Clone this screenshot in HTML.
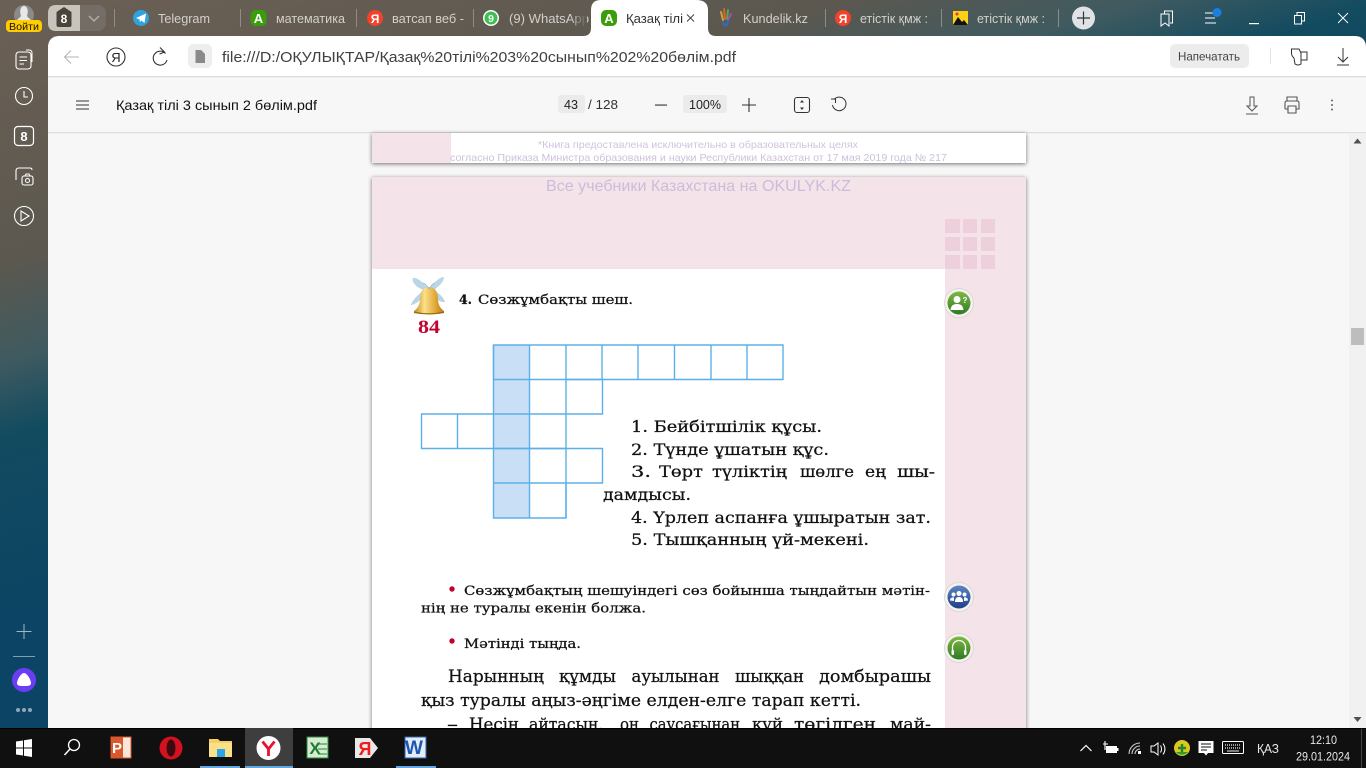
<!DOCTYPE html>
<html lang="ru"><head><meta charset="utf-8"><title>Қазақ тілі 3 сынып 2 бөлім.pdf</title>
<style>
html,body{margin:0;padding:0;width:1366px;height:768px;overflow:hidden;background:#f7f7f7}
svg{display:block;position:absolute;left:0;top:0}
text{font-family:"Liberation Sans","DejaVu Sans",sans-serif;white-space:pre}
.tab{font-size:13px;fill:#d3d0cb}
.s{font-family:"DejaVu Serif","Liberation Serif",serif;fill:#111;stroke:#111;stroke-width:.25px}
.r84{font-family:"Liberation Serif",serif;font-size:19px;font-weight:bold;fill:#c4002f}
.l{font-size:15.5px}.m{font-size:13px}.b{font-size:16.5px}
.ws{fill:none;stroke:#fff}
.dk{fill:none;stroke:#333}
.lk{fill:none;stroke:#555}
.gr{fill:none;stroke:#5cb0ea;stroke-width:1.4px}
</style></head><body>
<svg width="1366" height="768" viewBox="0 0 1366 768" xmlns="http://www.w3.org/2000/svg">
<defs>
<linearGradient id="bg" gradientUnits="userSpaceOnUse" x1="0" y1="0" x2="180" y2="570">
<stop offset="0" stop-color="#6b6055"/><stop offset=".42" stop-color="#5c584f"/><stop offset=".58" stop-color="#3f5a60"/><stop offset=".7" stop-color="#124b60"/><stop offset="1" stop-color="#0b4464"/></linearGradient>
<linearGradient id="fade" x1="0" x2="1" y1="0" y2="0"><stop offset="0" stop-color="#5f5a52" stop-opacity="0"/><stop offset="1" stop-color="#5f5a52"/></linearGradient>
<linearGradient id="bell" x1="0" x2="1" y1="0" y2="0"><stop offset="0" stop-color="#c4881e"/><stop offset=".35" stop-color="#fbe08a"/><stop offset=".7" stop-color="#e2a93a"/><stop offset="1" stop-color="#b97a14"/></linearGradient>
<linearGradient id="grn" x1="0" x2="0" y1="0" y2="1"><stop offset="0" stop-color="#7fb843"/><stop offset="1" stop-color="#2f7a26"/></linearGradient>
<linearGradient id="blu" x1="0" x2="0" y1="0" y2="1"><stop offset="0" stop-color="#5c84c4"/><stop offset="1" stop-color="#1f3f8a"/></linearGradient>
<filter id="sh" x="-5%" y="-20%" width="110%" height="140%"><feDropShadow dx="0" dy="1" stdDeviation="2" flood-color="#000" flood-opacity=".55"/></filter>
</defs>

<rect width="1366" height="768" fill="url(#bg)"/>

<!-- browser content -->
<path d="M60 36H1354Q1366 36 1366 48V768H48V48Q48 36 60 36Z" fill="#f7f7f7"/>
<path d="M60 36H1354Q1366 36 1366 48V76H48V48Q48 36 60 36Z" fill="#fff"/>
<rect x="48" y="76" width="1318" height="1.3" fill="#dcdcdc"/>
<rect x="48" y="132" width="1318" height="1.3" fill="#dedede"/>

<!-- active tab -->
<path d="M583 36Q591 36 591 28V10Q591 0 601 0H696Q708 0 708 10V28Q708 36 716 36Z" fill="#fff"/>

<!-- user / group -->
<circle cx="24" cy="15" r="10" fill="#8a8a8a"/>
<path d="M16 22C18 18 20 18 21 16C19 10 21 6 24 6C27 6 29 10 27 16C28 18 30 18 32 22Z" fill="#e8e8e8"/>
<rect x="6" y="20" width="36" height="12" rx="4" fill="#ffcc00"/>
<text x="9" y="30" font-size="10.5" fill="#111" textLength="30" lengthAdjust="spacingAndGlyphs">Войти</text>
<rect x="48" y="5" width="58" height="26" rx="8" fill="#77706a" opacity=".8"/>
<path d="M56 5H80V31H56Q48 31 48 23V13Q48 5 56 5Z" fill="#c9c4bb"/>
<path d="M56.500 12L64 7L71.500 12V25Q71.500 27 69.500 27H58.500Q56.500 27 56.500 25Z" fill="#4b443d"/>
<text x="64" y="23" font-size="12" font-weight="bold" fill="#fff" text-anchor="middle">8</text>
<path d="M89 16L94 21L99 16" fill="none" stroke="#b8b3ab" stroke-width="1.3"/>

<!-- separators -->
<g fill="#8f8c86"><rect x="114" y="9" width="1" height="18"/><rect x="240" y="9" width="1" height="18"/><rect x="356" y="9" width="1" height="18"/><rect x="473" y="9" width="1" height="18"/><rect x="825" y="9" width="1" height="18"/><rect x="941" y="9" width="1" height="18"/><rect x="1058" y="9" width="1" height="18"/></g>

<!-- tabs -->
<circle cx="141" cy="18" r="8" fill="#2fa3de"/><path d="M136 18L146 13.500L144.500 23L141.500 20.500L140 22L139.500 19.500Z" fill="#fff"/>
<text class="tab" x="158" y="23" textLength="52" lengthAdjust="spacingAndGlyphs">Telegram</text>

<rect x="250.500" y="10" width="16" height="16" rx="5" fill="#3b9c0c"/><text x="258.500" y="23" font-size="13" font-weight="bold" fill="#fff" text-anchor="middle">А</text>
<text class="tab" x="276" y="23" textLength="69" lengthAdjust="spacingAndGlyphs">математика</text>

<circle cx="375" cy="18" r="8" fill="#f5402a"/><text x="375" y="23" font-size="12" font-weight="bold" fill="#fff" text-anchor="middle">Я</text>
<text class="tab" x="392" y="23" textLength="72" lengthAdjust="spacingAndGlyphs">ватсап веб -</text>

<circle cx="491" cy="18" r="8" fill="#fff"/><circle cx="491" cy="18" r="6.500" fill="#3fbf4f"/><text x="491" y="22" font-size="10.500" font-weight="bold" fill="#fff" text-anchor="middle">9</text>
<text class="tab" x="509" y="23" textLength="80" lengthAdjust="spacingAndGlyphs">(9) WhatsApp</text>
<rect x="570" y="8" width="17" height="20" fill="url(#fade)"/>

<rect x="601" y="10" width="16" height="16" rx="5" fill="#3b9c0c"/><text x="609" y="23" font-size="13" font-weight="bold" fill="#fff" text-anchor="middle">А</text>
<text x="626" y="23" font-size="13" fill="#333" textLength="57" lengthAdjust="spacingAndGlyphs">Қазақ тілі</text>
<path d="M687 14.500L694 21.500M694 14.500L687 21.500" fill="none" stroke="#444" stroke-width="1"/>

<g fill="none" stroke-width="2" stroke-linecap="round"><path d="M721 12L723 20" stroke="#c9a33a"/><path d="M724 9L725 19" stroke="#d8622a"/><path d="M728 10L727 19" stroke="#5aa84a"/><path d="M731 14L728 20" stroke="#9a55b0"/><path d="M723 22C724 27 728 26 728 21" stroke="#2c6cc4"/></g>
<text class="tab" x="743" y="23" textLength="65" lengthAdjust="spacingAndGlyphs">Kundelik.kz</text>

<circle cx="843" cy="18" r="8" fill="#f5402a"/><text x="843" y="23" font-size="12" font-weight="bold" fill="#fff" text-anchor="middle">Я</text>
<text class="tab" x="860" y="23" textLength="68" lengthAdjust="spacingAndGlyphs">етістік қмж :</text>

<rect x="953" y="11" width="15" height="14" fill="#fcd116"/><path d="M953 25L958 17L962 22L964 20L968 25Z" fill="#111"/><circle cx="957" cy="14" r="1.500" fill="#e33"/>
<text class="tab" x="977" y="23" textLength="68" lengthAdjust="spacingAndGlyphs">етістік қмж :</text>

<circle cx="1083.500" cy="18" r="11.500" fill="#dfe3e6"/><path d="M1083.500 11.500V24.500M1077 18H1090" stroke="#333" stroke-width="1.200"/>

<!-- window controls -->
<path d="M1164.500 14V11H1172.500V23H1170M1161 14H1169V26L1165 23L1161 26Z" class="ws" stroke-width="1"/>
<path d="M1205 13H1214M1205 18H1215M1205 23H1216" class="ws" stroke-width="1"/><circle cx="1217" cy="12.500" r="4.500" fill="#1c7fe0"/>
<rect x="1249" y="23" width="10" height="1.200" fill="#fff"/>
<path d="M1294.500 15.500H1301.500V24H1294.500ZM1297 15.500V12.500H1304.500V21H1301.500" class="ws" stroke-width="1"/>
<path d="M1338 13L1348 23M1348 13L1338 23" class="ws" stroke-width=".9"/>

<!-- sidebar icons -->
<rect x="16" y="52" width="15" height="17" rx="3" class="ws" stroke-width="1.100"/>
<path d="M26 50H29Q32 50 32 53V62" class="ws" stroke-width="1"/><path d="M19.500 57H27M19.500 60.500H27M19.500 64H24" class="ws" stroke-width="1"/>
<circle cx="24" cy="96" r="8.500" class="ws" stroke-width="1.100"/><path d="M24 91V97H28" class="ws" stroke-width="1.100"/>
<rect x="14.500" y="126.500" width="19" height="19" rx="3.500" class="ws" stroke-width="1.200"/><text x="24" y="141" font-size="13" font-weight="bold" fill="#fff" text-anchor="middle">8</text>
<path d="M16 180V171Q16 168 19 168H30Q32 168 32 170" class="ws" stroke-width="1.100"/><rect x="22" y="176" width="11" height="9" rx="2" class="ws" stroke-width="1.100"/><circle cx="27.500" cy="180.500" r="2" class="ws" stroke-width="1"/><path d="M25 176L26 174H29L30 176" class="ws" stroke-width="1"/>
<circle cx="24" cy="216" r="9.500" class="ws" stroke-width="1.100"/><path d="M21 211V221L29 216Z" class="ws" stroke-width="1.100"/>
<path d="M24 624V639M16.500 631.500H31.500" stroke="#9db8c6" stroke-width="1"/>
<rect x="13" y="656" width="22" height="1" fill="#7ea0b2"/>
<circle cx="24" cy="680" r="12" fill="#6a3df0"/><path d="M24 673C27 673 31 680 31 683C31 686 28 686 24 686C20 686 17 686 17 683C17 680 21 673 24 673Z" fill="#fff"/>
<g fill="#8fa9b8"><circle cx="18" cy="710" r="2"/><circle cx="24" cy="710" r="2"/><circle cx="30" cy="710" r="2"/></g>

<!-- address bar -->
<path d="M79 57H65M71 50.500L64.500 57L71 63.500" fill="none" stroke="#b5b5b5" stroke-width="1.100"/>
<circle cx="116" cy="57" r="9" class="dk" stroke-width="1.100"/><text x="116" y="62" font-size="13" fill="#222" text-anchor="middle">Я</text>
<path d="M165.500 53.500A7 7 0 1 0 167 60M160 47.500L164.500 52L159.500 54" class="dk" stroke-width="1.100"/>
<rect x="188" y="44" width="24" height="24" rx="5" fill="#eeeeee"/><path d="M195.500 50H201L205 54V63H195.500Z" fill="#8a8a8a"/>
<text x="222" y="62" font-size="15" fill="#404040" textLength="514" lengthAdjust="spacingAndGlyphs">file:///D:/ОҚУЛЫҚТАР/Қазақ%20тілі%203%20сынып%202%20бөлім.pdf</text>
<rect x="1170" y="44" width="79" height="24" rx="5" fill="#ececec"/>
<text x="1178" y="60.500" font-size="12" fill="#444" textLength="62" lengthAdjust="spacingAndGlyphs">Напечатать</text>
<rect x="1270" y="48" width="1" height="16" fill="#e4e4e4"/>
<path d="M1291.500 49H1299L1301 53V64Q1298 66 1295 64L1294 58Q1291.500 56 1291.500 53ZM1301 52H1307V60H1301" class="dk" stroke-width="1"/>
<path d="M1343 48V62M1338 57L1343 62L1348 57M1337 65H1349" class="dk" stroke-width="1"/>

<!-- pdf toolbar -->
<path d="M76 101H89M76 105H89M76 109H89" stroke="#333" stroke-width="1.100"/>
<text x="116" y="110" font-size="14" fill="#111" textLength="201" lengthAdjust="spacingAndGlyphs">Қазақ тілі 3 сынып 2 бөлім.pdf</text>
<rect x="558" y="95" width="27" height="18" rx="3" fill="#ebebeb"/>
<text x="564" y="109" font-size="13" fill="#222" textLength="14" lengthAdjust="spacingAndGlyphs">43</text>
<text x="588" y="109" font-size="13" fill="#333" textLength="30" lengthAdjust="spacingAndGlyphs">/ 128</text>
<rect x="655" y="104.500" width="12" height="1.100" fill="#333"/>
<rect x="683" y="95" width="44" height="18" rx="3" fill="#ebebeb"/>
<text x="689" y="109" font-size="13" fill="#222" textLength="32" lengthAdjust="spacingAndGlyphs">100%</text>
<path d="M749 98V112M742 105H756" stroke="#333" stroke-width="1.100"/>
<rect x="794.500" y="97.500" width="15" height="15" rx="2.500" class="dk" stroke-width="1.100"/>
<path d="M802 100L804 102.500H800ZM802 110L804 107.500H800Z" fill="#333"/>
<path d="M834 99.500A6.800 6.800 0 1 1 832.500 105M831 99H835.500V103" class="dk" stroke-width="1"/>
<path d="M1250 97H1254V106H1257L1252 111L1247 106H1250ZM1246 114H1258" class="lk" stroke-width="1"/>
<path d="M1287 101V97H1297V101M1285 109V103Q1285 101 1287 101H1297Q1299 101 1299 103V109H1296M1288 109H1285M1288 106H1296V113H1288Z" class="lk" stroke-width="1.100"/>
<g fill="#666"><circle cx="1332" cy="100.500" r="1"/><circle cx="1332" cy="105" r="1"/><circle cx="1332" cy="109.500" r="1"/></g>

<!-- scrollbar -->
<rect x="1349" y="133" width="17" height="595" fill="#f1f1f1"/>
<path d="M1353.500 143.500L1357.500 138.500L1361.500 143.500Z" fill="#505050"/>
<rect x="1351" y="328" width="13" height="17" fill="#bdbdbd"/>
<path d="M1353.500 717L1357.500 722L1361.500 717Z" fill="#505050"/>

<!-- previous page -->
<g filter="url(#sh)"><rect x="372" y="133" width="654" height="30" fill="#fff"/></g>
<rect x="372" y="133" width="79" height="30" fill="#f5e3ea"/>
<text x="538" y="148" font-size="10.500" fill="#d0c4df" textLength="320" lengthAdjust="spacingAndGlyphs">*Книга предоставлена исключительно в образовательных целях</text>
<text x="450" y="161" font-size="10.500" fill="#cdc1dc" textLength="497" lengthAdjust="spacingAndGlyphs">согласно Приказа Министра образования и науки Республики Казахстан от 17 мая 2019 года № 217</text>

<!-- main page -->
<g filter="url(#sh)"><rect x="372" y="177" width="654" height="600" fill="#fff"/></g>
<rect x="372" y="177" width="654" height="92" fill="#f5e3ea"/>
<rect x="945" y="269" width="81" height="500" fill="#f5e3ea"/>
<text x="546" y="191" font-size="16" fill="#c9bdd9" textLength="305" lengthAdjust="spacingAndGlyphs">Все учебники Казахстана на OKULYK.KZ</text>
<g fill="#eed0dd">
<rect x="945" y="219" width="15" height="14"/><rect x="963" y="219" width="14" height="14"/><rect x="981" y="219" width="14" height="14"/>
<rect x="945" y="237" width="15" height="14"/><rect x="963" y="237" width="14" height="14"/><rect x="981" y="237" width="14" height="14"/>
<rect x="945" y="255" width="15" height="14"/><rect x="963" y="255" width="14" height="14"/><rect x="981" y="255" width="14" height="14"/>
</g>

<!-- bell -->
<path d="M429 289C424 283 417 277 413 278C411 282 417 288 424 290C418 295 412 300 411 305C416 305 424 297 428 292C433 297 439 303 445 302C444 297 438 293 434 290C438 287 444 282 444 277C439 277 433 284 429 289Z" fill="#b9d6e6"/>
<path d="M429 287C423 287 420 292 420 299C420 305 417 309 414 311V313Q429 316 444 313V311C441 309 438 305 438 299C438 292 435 287 429 287Z" fill="url(#bell)"/>
<path d="M414 311.500Q429 315 444 311.500V313Q429 316 444 313Q429 316 414 313Z" fill="#9c6a14"/>
<path d="M429 289C426 284 424 283 423 283M429 289C432 284 434 283 435 283" fill="none" stroke="#8fb6cc" stroke-width=".8"/>

<text class="s" x="459" y="304" font-size="13" font-weight="bold" textLength="13" lengthAdjust="spacingAndGlyphs">4.</text>
<text class="s m" x="478" y="304" textLength="155" lengthAdjust="spacingAndGlyphs">Сөзжұмбақты шеш.</text>
<text class="r84" x="418" y="333" textLength="22" lengthAdjust="spacingAndGlyphs">84</text>

<!-- crossword -->
<rect x="493.500" y="345" width="36" height="173" fill="#c8dff6"/>
<g class="gr">
<path d="M493.500 345H783V379.500H493.500Z"/>
<path d="M529.500 345V518M566 345V414M602 345V379.500M638 345V379.500M674.500 345V379.500M711 345V379.500M747 345V379.500"/>
<path d="M493.500 345V518H566V483H493.500M493.500 379.500V483"/>
<path d="M566 379.500H602.500V414H421.500V448.500H566M457.500 414V448.500"/>
<path d="M566 414V518M493.500 448.500H602.500V483H566"/>
</g>

<!-- clues -->
<text class="s l" x="631" y="432" textLength="191" lengthAdjust="spacingAndGlyphs">1. Бейбітшілік құсы.</text>
<text class="s l" x="631" y="455" textLength="198" lengthAdjust="spacingAndGlyphs">2. Түнде ұшатын құс.</text>
<text class="s l" x="631" y="477" textLength="20" lengthAdjust="spacingAndGlyphs">3.</text>
<text class="s l" x="659" y="477" textLength="44" lengthAdjust="spacingAndGlyphs">Төрт</text>
<text class="s l" x="712" y="477" textLength="75" lengthAdjust="spacingAndGlyphs">түліктің</text>
<text class="s l" x="800" y="477" textLength="54" lengthAdjust="spacingAndGlyphs">шөлге</text>
<text class="s l" x="865" y="477" textLength="21" lengthAdjust="spacingAndGlyphs">ең</text>
<text class="s l" x="897" y="477" textLength="38" lengthAdjust="spacingAndGlyphs">шы-</text>
<text class="s l" x="603" y="500" textLength="88" lengthAdjust="spacingAndGlyphs">дамдысы.</text>
<text class="s l" x="631" y="523" textLength="300" lengthAdjust="spacingAndGlyphs">4. Үрлеп аспанға ұшыратын зат.</text>
<text class="s l" x="631" y="545" textLength="238" lengthAdjust="spacingAndGlyphs">5. Тышқанның үй-мекені.</text>

<!-- body -->
<circle cx="452" cy="589" r="2.700" fill="#c4002f"/>
<text class="s m" x="464" y="595" textLength="466" lengthAdjust="spacingAndGlyphs">Сөзжұмбақтың шешуіндегі сөз бойынша тыңдайтын мәтін-</text>
<text class="s m" x="421" y="612.500" textLength="225" lengthAdjust="spacingAndGlyphs">нің не туралы екенін болжа.</text>
<circle cx="452" cy="641" r="2.700" fill="#c4002f"/>
<text class="s m" x="464" y="648" textLength="117" lengthAdjust="spacingAndGlyphs">Мәтінді тыңда.</text>

<text class="s b" x="448" y="682" textLength="96" lengthAdjust="spacingAndGlyphs">Нарынның</text>
<text class="s b" x="559" y="682" textLength="57" lengthAdjust="spacingAndGlyphs">құмды</text>
<text class="s b" x="631.500" y="682" textLength="88" lengthAdjust="spacingAndGlyphs">ауылынан</text>
<text class="s b" x="735" y="682" textLength="69" lengthAdjust="spacingAndGlyphs">шыққан</text>
<text class="s b" x="819" y="682" textLength="112" lengthAdjust="spacingAndGlyphs">домбырашы</text>
<text class="s b" x="421" y="706" textLength="440" lengthAdjust="spacingAndGlyphs">қыз туралы аңыз-әңгіме елден-елге тарап кетті.</text>
<text class="s b" x="447" y="730" textLength="11" lengthAdjust="spacingAndGlyphs">–</text>
<text class="s b" x="469" y="730" textLength="50" lengthAdjust="spacingAndGlyphs">Несін</text>
<text class="s b" x="529" y="730" textLength="74" lengthAdjust="spacingAndGlyphs">айтасың,</text>
<text class="s b" x="620" y="730" textLength="19" lengthAdjust="spacingAndGlyphs">он</text>
<text class="s b" x="649.500" y="730" textLength="90.500" lengthAdjust="spacingAndGlyphs">саусағынан</text>
<text class="s b" x="752" y="730" textLength="31" lengthAdjust="spacingAndGlyphs">күй</text>
<text class="s b" x="794" y="730" textLength="82" lengthAdjust="spacingAndGlyphs">төгілген</text>
<text class="s b" x="890" y="730" textLength="41" lengthAdjust="spacingAndGlyphs">май-</text>

<!-- side badges -->
<circle cx="959" cy="303" r="14.500" fill="#f4f1ee" stroke="#dcd8d4"/><circle cx="959" cy="303" r="11.500" fill="url(#grn)"/>
<circle cx="957" cy="299.500" r="3.500" fill="#fff"/><path d="M950.500 310C951 305 954 304 957 304C960 304 963 305 963.500 310Z" fill="#fff"/>
<text x="965" y="303" font-size="8" font-weight="bold" fill="#fff" text-anchor="middle">?</text>

<circle cx="959" cy="597" r="14.500" fill="#f4f1ee" stroke="#dcd8d4"/><circle cx="959" cy="597" r="11.500" fill="url(#blu)"/>
<g fill="#fff"><circle cx="959" cy="593.500" r="2.500"/><circle cx="953.500" cy="594.500" r="2"/><circle cx="964.500" cy="594.500" r="2"/><path d="M955 602C955 598 957 597 959 597C961 597 963 598 963 602Z"/><path d="M950 600.500C950 598 952 597 954 597.500L954 601ZM968 600.500C968 598 966 597 964 597.500L964 601Z"/></g>

<circle cx="959" cy="648" r="14.500" fill="#f4f1ee" stroke="#dcd8d4"/><circle cx="959" cy="648" r="11.500" fill="url(#grn)"/>
<path d="M952.500 651V647A6.500 6.500 0 0 1 965.500 647V651" fill="none" stroke="#fff" stroke-width="1.300"/><rect x="951.500" y="650" width="2.500" height="5" rx="1" fill="#fff"/><rect x="964" y="650" width="2.500" height="5" rx="1" fill="#fff"/>

<!-- taskbar -->
<rect x="0" y="728" width="1366" height="40" fill="#101010"/>
<rect x="0" y="728" width="1366" height="1" fill="#000"/>
<rect x="245" y="728" width="48" height="40" fill="#3e3e3e"/>
<rect x="200" y="766" width="40" height="2" fill="#63a7e0"/><rect x="245" y="766" width="48" height="2" fill="#63a7e0"/><rect x="396" y="766" width="40" height="2" fill="#63a7e0"/>

<path d="M16 741.500L23 740.500V747.500H16ZM24 740.300L32 739V747.500H24ZM16 748.500H23V755.500L16 754.500ZM24 748.500H32V757L24 755.700Z" fill="#fff"/>
<circle cx="74" cy="745" r="5.500" fill="none" stroke="#fff" stroke-width="1.300"/><path d="M70 749L64.500 755" stroke="#fff" stroke-width="1.500"/>

<rect x="111" y="737" width="20" height="21" fill="#fbe7da" stroke="#d3532a"/><rect x="111" y="737" width="12" height="21" fill="#d9582c"/><text x="117" y="753" font-size="15" font-weight="bold" fill="#fff" text-anchor="middle">P</text>
<ellipse cx="171" cy="748" rx="11.500" ry="11.500" fill="#d3111f"/><ellipse cx="171" cy="748" rx="4.500" ry="8.500" fill="#3a0a0e"/>
<path d="M209 739H218L220 741H232V757H209Z" fill="#f5cf62"/><rect x="209" y="743" width="23" height="14" fill="#fbe08a"/><path d="M217 749H225V757H217Z" fill="#2aa6e8"/>
<circle cx="268.500" cy="748" r="12" fill="#fff"/><path d="M262.500 741.500L268.500 749L274.500 741.500M268.500 749V756" fill="none" stroke="#e8132a" stroke-width="2.800"/>
<rect x="307" y="737" width="21" height="21" fill="#d7ead2" stroke="#2e8b3c"/><path d="M318 744H327M318 749H327M318 754H327" stroke="#5bab68" stroke-width="1.500"/><text x="315" y="754" font-size="17" font-weight="bold" fill="#1d7a30" text-anchor="middle">X</text>
<path d="M355 738H370L378 748L370 758H355Z" fill="#e8e8e8"/><text x="365" y="755" font-size="18" font-weight="bold" fill="#ee1c1c" text-anchor="middle">Я</text>
<rect x="405" y="737" width="21" height="21" fill="#e3ecf7" stroke="#2a62b8"/><text x="414" y="754" font-size="19" font-weight="bold" fill="#1c56b4" text-anchor="middle">W</text>

<!-- tray -->
<path d="M1080.500 751L1086 745.500L1091.500 751" class="ws" stroke-width="1.200"/>
<path d="M1103 744H1108M1105 741V744M1105 744V750" class="ws" stroke-width="1.100"/><rect x="1106" y="746" width="11" height="7" fill="#fff"/><rect x="1117" y="748" width="1.500" height="3" fill="#fff"/>
<path d="M1129 754A11 11 0 0 1 1140 743M1132 754A8 8 0 0 1 1140 746M1135 754A5 5 0 0 1 1140 749" fill="none" stroke="#ccc" stroke-width="1.100"/><rect x="1138" y="751" width="3" height="3" fill="#fff"/>
<path d="M1151 746H1154L1158 743V755L1154 752H1151ZM1160.500 745.500C1162 748 1162 750 1160.500 752.500M1163 743.500C1165.500 747 1165.500 751 1163 754.500" class="ws" stroke-width="1"/>
<circle cx="1182" cy="748" r="8" fill="#dcc81e"/><path d="M1176 752A8 8 0 0 0 1188 752Z" fill="#2b9a3a"/><path d="M1182 744V752M1178 748H1186" stroke="#1a8a2e" stroke-width="2.400"/>
<path d="M1198.500 741H1213.500V753H1208L1206 755.500L1204 753H1198.500Z" fill="#fff"/><path d="M1201 744H1211M1201 747H1211M1201 750H1207" stroke="#111" stroke-width=".9"/>
<rect x="1222.500" y="741.500" width="21" height="12" rx="1" class="ws" stroke-width="1"/><path d="M1225 745H1241M1225 748H1241" stroke="#eee" stroke-width="1.200" stroke-dasharray="1 1"/><path d="M1227 751H1239" stroke="#eee" stroke-width="1"/>
<text x="1257" y="753" font-size="12.500" fill="#e8e8e8" textLength="22" lengthAdjust="spacingAndGlyphs">ҚАЗ</text>
<text x="1310" y="744" font-size="12" fill="#e8e8e8" textLength="27" lengthAdjust="spacingAndGlyphs">12:10</text>
<text x="1296" y="760.500" font-size="12" fill="#e8e8e8" textLength="54" lengthAdjust="spacingAndGlyphs">29.01.2024</text>
<rect x="1361" y="729" width="1" height="39" fill="#444"/>
</svg>
</body></html>
